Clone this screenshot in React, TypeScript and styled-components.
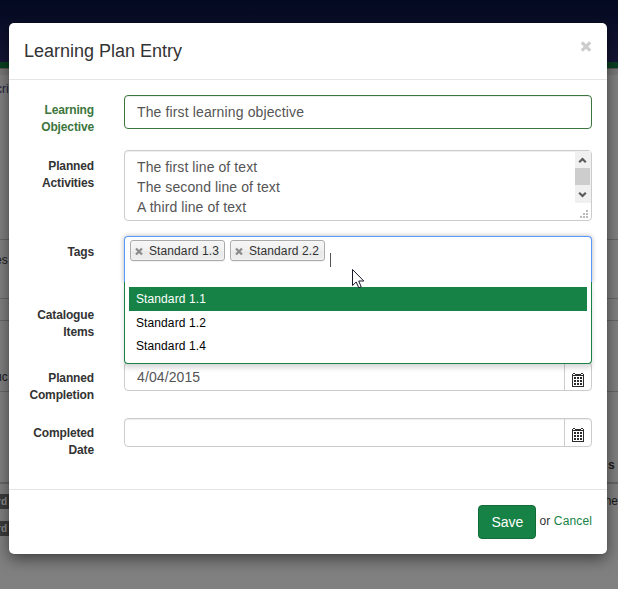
import React from "react";
import styled, { createGlobalStyle, css } from "styled-components";

const GREEN = "#168245";

const Global = createGlobalStyle`
  * { box-sizing: border-box; }
  html, body, #root { margin: 0; height: 100%; }
  body {
    overflow: hidden;
    background: #808080;
    color: #333;
    font: 12px/17px "Liberation Sans", Arial, sans-serif;
  }
`;

const Screen = styled.div`
  position: relative;
  width: 618px;
  height: 589px;
  overflow: hidden;
`;

const Backdrop = styled.div`
  position: absolute;
  inset: 0;
  display: flex;
  flex-direction: column;
`;

const NavBar = styled.div`
  height: 69px;
  flex: none;
  background: linear-gradient(#030a20, #171638);
  border-bottom: 1px solid #565656;
  box-shadow: inset 0 -6px #0a4021, 0 6px #777;
`;

const BackRow = styled.div<{ $h: number; $line?: number }>`
  display: flex;
  flex: none;
  align-items: flex-start;
  justify-content: space-between;
  height: ${(p) => p.$h}px;
  border-bottom: ${(p) => p.$line ?? 1}px solid #666;
`;

const BackText = styled.span<{ $top: number; $shift?: number; $bold?: boolean; $link?: boolean }>`
  margin-top: ${(p) => p.$top}px;
  margin-left: ${(p) => p.$shift ?? 0}px;
  font-weight: ${(p) => (p.$bold ? 700 : 400)};
  color: ${(p) => (p.$link ? "#22223d" : "#1a1a1a")};
`;

const BadgeStack = styled.div`
  display: flex;
  flex-direction: column;
  gap: 12px;
  margin-top: 10px;
`;

const BackBadge = styled.span`
  width: 30px;
  height: 15px;
  background: #3c3c3c;
  color: #8c8c8c;
  font: bold 10px/16px "Liberation Sans", Arial, sans-serif;
  text-indent: -3px;
`;

const Modal = styled.section`
  position: relative;
  width: 598px;
  height: 531px;
  margin: 23px 0 0 9px;
  display: flex;
  flex-direction: column;
  background: #fff;
  border-radius: 5px;
  box-shadow: 0 5px 15px rgba(0, 0, 0, 0.5), 0 0 1px rgba(0, 0, 0, 0.4);
`;

const Header = styled.header`
  display: flex;
  justify-content: space-between;
  height: 57px;
  padding: 15px;
  border-bottom: 1px solid #e5e5e5;
`;

const Title = styled.h4`
  margin: 0;
  font-weight: 400;
  font-size: 18px;
  line-height: 26px;
`;

const CloseButton = styled.button`
  display: flex;
  width: 12px;
  height: 12px;
  margin: 2px 0 0;
  padding: 0;
  border: 0;
  background: none;
`;

const Body = styled.div`
  flex: 1;
  padding: 15px;
`;

const Row = styled.div<{ $h: number }>`
  display: grid;
  grid-template-columns: 70px 468px;
  column-gap: 30px;
  height: ${(p) => p.$h}px;
`;

const Label = styled.label<{ $valid?: boolean }>`
  padding-top: ${(p) => (p.$valid ? 7 : 8)}px;
  text-align: right;
  font-weight: 700;
  letter-spacing: -0.14px;
  color: ${(p) => (p.$valid ? "#3c763d" : "#333")};
`;

const field = css`
  border: 1px solid #ccc;
  border-radius: 4px;
  background: #fff;
  box-shadow: inset 0 1px 1px rgba(0, 0, 0, 0.075);
  color: #555;
  font: 14px/20px "Liberation Sans", Arial, sans-serif;
`;

const TextField = styled.div`
  ${field}
  height: 34px;
  padding: 6px 12px;
  border-color: #3c763d;
  letter-spacing: 0.13px;
`;

const TextArea = styled.div`
  ${field}
  display: flex;
  justify-content: space-between;
  height: 71px;
  padding: 0 0 0 12px;
`;

const Lines = styled.div`
  padding-top: 6px;
  white-space: pre-line;
  letter-spacing: 0.09px;
`;

const TagsControl = styled.div`
  position: relative;
  height: 46px;
`;

const TagBox = styled.div`
  display: flex;
  gap: 5px;
  height: 47px;
  padding: 3px 5px;
  border: 1px solid #5897fb;
  border-bottom: 0;
  border-radius: 4px 4px 0 0;
  background: #fff;
  box-shadow: 0 0 5px rgba(0, 0, 0, 0.3);
`;

const Tag = styled.span`
  display: flex;
  align-items: center;
  height: 21px;
  width: 95px;
  padding: 1px 0 0 4px;
  gap: 6px;
  border: 1px solid #aaa;
  border-radius: 3px;
  background: linear-gradient(#f4f4f4 20%, #f0f0f0 50%, #e8e8e8 52%, #eee);
  box-shadow: 0 0 2px #fff inset, 0 1px 0 rgba(0, 0, 0, 0.05);
  letter-spacing: 0.1px;
  line-height: 18px;
  white-space: nowrap;
`;

const Caret = styled.i`
  width: 1px;
  height: 14px;
  margin-top: 13px;
  background: #555;
`;

const Menu = styled.ul`
  position: absolute;
  z-index: 2;
  top: 46px;
  left: 0;
  width: 468px;
  height: 82px;
  margin: 0;
  padding: 5px 4px 0;
  list-style: none;
  background: #fff;
  border: 1px solid ${GREEN};
  border-top: 0;
  border-radius: 0 0 4px 4px;
  box-shadow: 0 4px 5px rgba(0, 0, 0, 0.15);
  color: #000;
  letter-spacing: 0.1px;
`;

const Option = styled.li<{ $active?: boolean }>`
  height: ${(p) => (p.$active ? 24 : 23)}px;
  padding-left: 7px;
  line-height: 24px;
  ${(p) => p.$active && css`background: ${GREEN}; color: #fff;`}
`;

const PointerIcon = styled.svg`
  position: absolute;
  z-index: 3;
  left: 228px;
  top: 33px;
`;

const DateGroup = styled.div<{ $top?: number }>`
  ${field}
  display: flex;
  height: 29px;
  margin-top: ${(p) => p.$top ?? 0}px;
`;

const DateValue = styled.span`
  flex: 1;
  padding: 4px 12px;
  letter-spacing: 0.1px;
`;

const Addon = styled.span<{ $top: number }>`
  display: flex;
  width: 27px;
  padding: ${(p) => p.$top}px 0 0 7px;
  border-left: 1px solid #ccc;
`;

const Footer = styled.footer`
  display: flex;
  justify-content: flex-end;
  height: 65px;
  padding: 15px;
  border-top: 1px solid #e5e5e5;
`;

const SaveButton = styled.button`
  width: 58px;
  height: 34px;
  margin-right: 3px;
  padding: 0;
  border: 1px solid #126c39;
  border-radius: 4px;
  background: ${GREEN};
  color: #fff;
  font: 14px/20px "Liberation Sans", Arial, sans-serif;
`;

const CancelText = styled.span`
  margin-top: 8px;
  letter-spacing: 0.13px;
`;

const CancelLink = styled.a`
  color: ${GREEN};
`;

const ScrollIcon = () => (
  <svg width="16" height="69" shapeRendering="crispEdges">
    <rect width="16" height="52" fill="#f0f0f0" />
    <rect y="17" width="15" height="17" fill="#cdcdcd" />
    <path d="M4.2 11.2L7.5 8L10.8 11.2M4.2 41.7L7.5 45L10.8 41.7" fill="none" stroke="#5a5a5a" strokeWidth="2.2" shapeRendering="auto" />
    <path d="M11 59h2v2h-2zM8 62h2v2h-2zM11 62h2v2h-2zM5 65h2v2h-2zM8 65h2v2h-2zM11 65h2v2h-2z" fill="#bbb" />
  </svg>
);

const CalendarIcon = () => (
  <svg width="12" height="14" shapeRendering="crispEdges" fill="#2b2b2b">
    <path fillRule="evenodd" d="M0 1h1v1h2V1h6v1h2V1h1v13H0zM1 3h10v10H1z" />
    <path d="M1 0h2v1H1zM9 0h2v1H9z" />
    <path d="M2 4h2v2H2zM5 4h2v2H5zM8 4h2v2H8zM2 7h2v2H2zM5 7h2v2H5zM8 7h2v2H8zM2 10h2v2H2zM5 10h2v2H5zM8 10h2v2H8z" />
  </svg>
);

const Cross = () => (
  <svg width="8" height="8" viewBox="0 0 8 8">
    <path d="M1 1.5L7 7.5M7 1.5L1 7.5" stroke="#8b8b8b" strokeWidth="2.2" />
  </svg>
);

export default function App() {
  return (
    <Screen>
      <Global />
      <Backdrop>
        <NavBar />
        <BackRow $h={171}>
          <BackText $top={12} $shift={-4} $link>cri</BackText>
        </BackRow>
        <BackRow $h={59}>
          <BackText $top={12} $shift={-5}>es</BackText>
        </BackRow>
        <BackRow $h={22} />
        <BackRow $h={71}>
          <BackText $top={48} $shift={-5}>uc</BackText>
        </BackRow>
        <BackRow $h={92} $line={2}>
          <span />
          <BackText $top={65} $bold>s&nbsp;</BackText>
        </BackRow>
        <BackRow $h={105} $line={0}>
          <BadgeStack>
            <BackBadge>rd</BackBadge>
            <BackBadge>rd</BackBadge>
          </BadgeStack>
          <BackText $top={9}>ne</BackText>
        </BackRow>
      </Backdrop>
      <Modal>
        <Header>
          <Title>Learning Plan Entry</Title>
          <CloseButton aria-label="Close">
            <svg width="12" height="12">
              <path d="M1.8 2.3L10.2 10.7M10.2 2.3L1.8 10.7" stroke="#ccc" strokeWidth="3.2" />
            </svg>
          </CloseButton>
        </Header>
        <Body>
          <Row $h={55}>
            <Label $valid>Learning Objective</Label>
            <TextField>The first learning objective</TextField>
          </Row>
          <Row $h={86}>
            <Label>Planned Activities</Label>
            <TextArea>
              <Lines>{"The first line of text\nThe second line of text\nA third line of text"}</Lines>
              <ScrollIcon />
            </TextArea>
          </Row>
          <Row $h={63}>
            <Label>Tags</Label>
            <TagsControl>
              <TagBox>
                {["Standard 1.3", "Standard 2.2"].map((t) => (
                  <Tag key={t}>
                    <Cross />
                    {t}
                  </Tag>
                ))}
                <Caret />
              </TagBox>
              <Menu>
                <Option $active>Standard 1.1</Option>
                <Option>Standard 1.2</Option>
                <Option>Standard 1.4</Option>
              </Menu>
              <PointerIcon width="13" height="20">
                <path d="M.5.5v16l3.7-3.5 2.6 5.8 2.4-1-2.5-5.8h5.1z" fill="#fff" stroke="#1a1a2a" />
              </PointerIcon>
            </TagsControl>
          </Row>
          <Row $h={63}>
            <Label>Catalogue Items</Label>
          </Row>
          <Row $h={55}>
            <Label>Planned Completion</Label>
            <DateGroup>
              <DateValue>4/04/2015</DateValue>
              <Addon $top={10}>
                <CalendarIcon />
              </Addon>
            </DateGroup>
          </Row>
          <Row $h={55}>
            <Label>Completed Date</Label>
            <DateGroup $top={1}>
              <DateValue />
              <Addon $top={9}>
                <CalendarIcon />
              </Addon>
            </DateGroup>
          </Row>
        </Body>
        <Footer>
          <SaveButton>Save</SaveButton>
          <CancelText>
            or <CancelLink>Cancel</CancelLink>
          </CancelText>
        </Footer>
      </Modal>
    </Screen>
  );
}
